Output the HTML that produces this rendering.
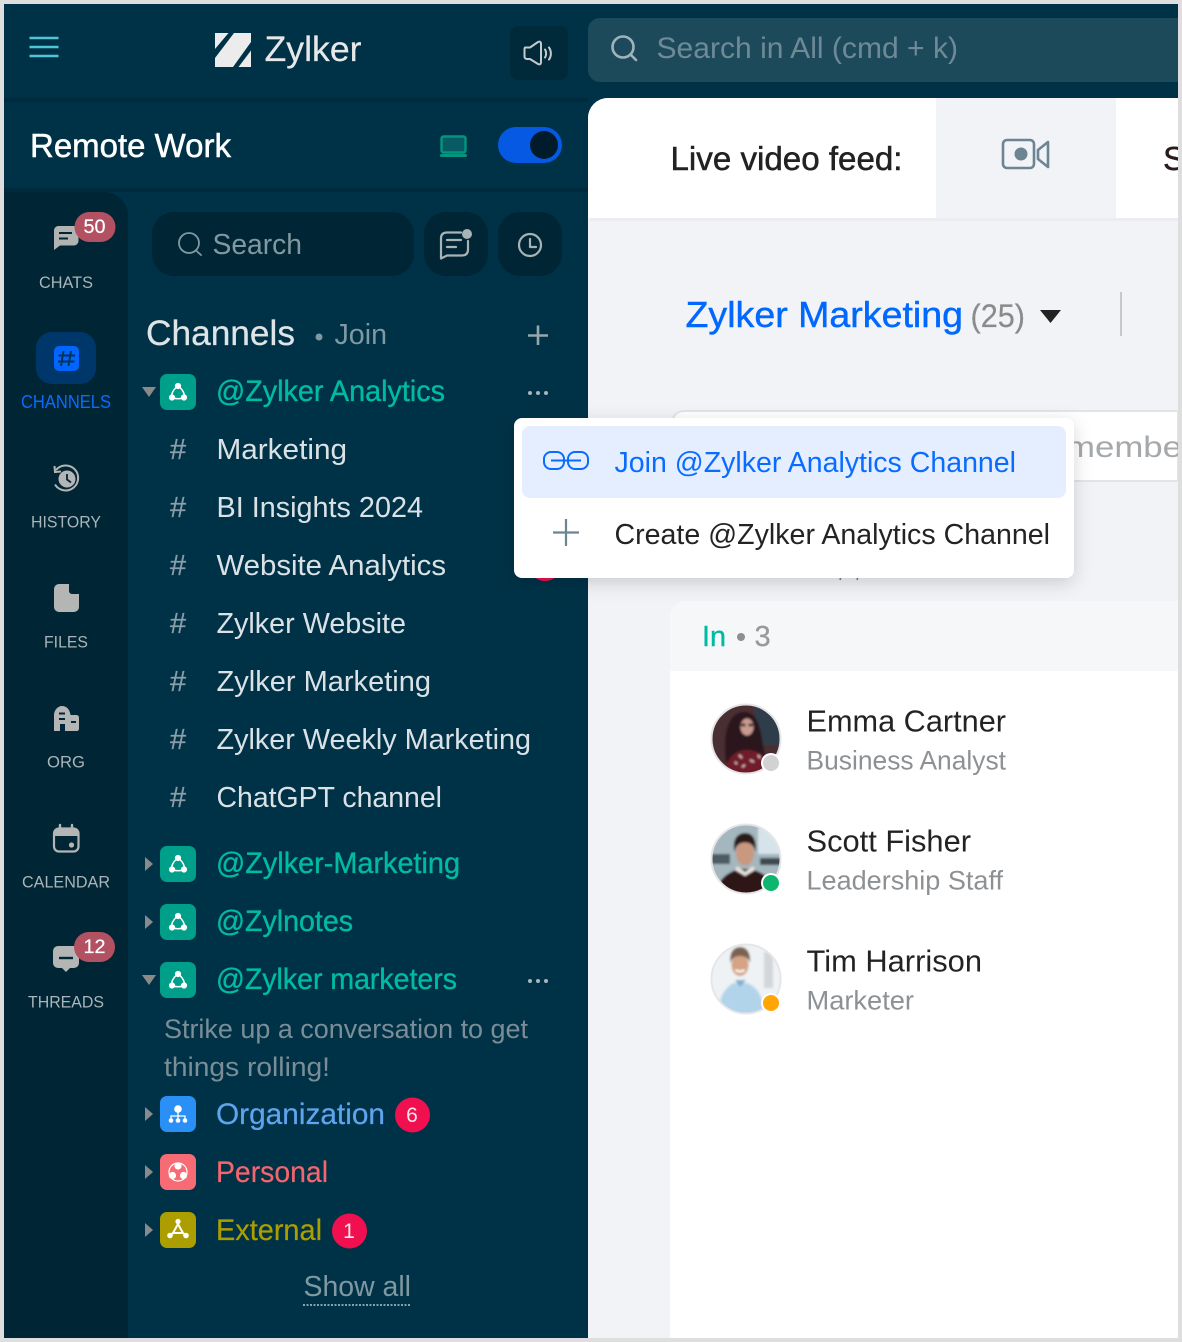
<!DOCTYPE html>
<html lang="en">
<head>
<meta charset="utf-8">
<title>Zylker Remote Work</title>
<style>
html,body{margin:0;padding:0;background:#dedede}
svg{display:block}
text{font-family:"Liberation Sans",sans-serif;white-space:pre}
.nav{font-size:17px;fill:#a9b5ba}
.ch{font-size:29px;fill:#dbe2e6}
.hash{font-size:29px;fill:#8b9ea8;stroke:#8b9ea8;stroke-width:.3}
.grp{font-size:30px;fill:#00bba4;stroke:#00bba4;stroke-width:.35}
.name{font-size:31px;fill:#232323}
.role{font-size:27px;fill:#8d9194}
</style>
</head>
<body>
<svg xmlns="http://www.w3.org/2000/svg" width="1182" height="1342" viewBox="0 0 1182 1342">
<defs>
<filter id="sh" x="-10%" y="-20%" width="120%" height="150%"><feDropShadow dx="0" dy="5" stdDeviation="9" flood-color="#000" flood-opacity=".16"/></filter>
<filter id="bl" x="-20%" y="-20%" width="140%" height="140%"><feGaussianBlur stdDeviation="1.100"/></filter>
<clipPath id="frame"><rect x="4" y="4" width="1174" height="1334"/></clipPath>
<clipPath id="a1"><circle cx="746" cy="739" r="34"/></clipPath>
<clipPath id="a2"><circle cx="746" cy="859" r="34"/></clipPath>
<clipPath id="a3"><circle cx="746" cy="979" r="34"/></clipPath>
<g id="team"><path d="M-1-5.500Q-7 0-6.500 5.500Q0 8 6.500 5.500Q7 0 1-5.500" fill="none" stroke="#fff" stroke-width="1.500"/><circle cx="0" cy="-6" r="3.100" fill="#fff"/><circle cx="-6" cy="5.500" r="3.100" fill="#fff"/><circle cx="6" cy="5.500" r="3.100" fill="#fff"/></g>
</defs>
<rect width="1182" height="1342" fill="#dedede"/>
<g clip-path="url(#frame)">
<rect x="4" y="4" width="1174" height="1334" fill="#003247"/>
<rect x="4" y="98" width="584" height="4" fill="#002b3e"/>
<rect x="4" y="188" width="584" height="4" fill="#002b3e"/>
<path d="M4 192H104a24 24 0 0 1 24 24V1338H4Z" fill="#002534"/>

<!-- top bar -->
<g stroke="#4fc5da" stroke-width="2.400"><path d="M29.500 38H58.500M29.500 47H58.500M29.500 56H58.500"/></g>
<g fill="#ececec">
<path d="M215 33H228.500L215 49Z"/>
<path d="M234 33H251V42L233 67H215V58Z"/>
<path d="M251 50.500V67H238.500Z"/>
</g>
<text x="264.500" y="61" font-size="35" fill="#e8e8e8" stroke="#e8e8e8" stroke-width=".2" textLength="97" lengthAdjust="spacingAndGlyphs">Zylker</text>
<rect x="510" y="26" width="58" height="54" rx="8" fill="#002a3a"/>
<g fill="none" stroke="#c3cbce" stroke-width="2" stroke-linecap="round" stroke-linejoin="round">
<path d="M525 47.500H530L538 42C540 41 541 42 541 44V62C541 64 540 65 538 64L530 59H527C525.500 59 524.500 58 524.500 56.500V49C524.500 48 525 47.500 525 47.500Z"/>
<path d="M545 49.500C546.500 51.500 546.500 55.500 545 57.500M549 47.500C551.500 51 551.500 56 549 59.500"/>
</g>
<path d="M1178 18H600a12 12 0 0 0-12 12V70a12 12 0 0 0 12 12H1178Z" fill="#1c4a5b"/>
<circle cx="623" cy="47" r="10.500" fill="none" stroke="#a1b2ba" stroke-width="2.600"/>
<path d="M631 55L636 60" stroke="#a1b2ba" stroke-width="2.600" stroke-linecap="round"/>
<text x="656.500" y="58" font-size="30" fill="#6f8a96" textLength="301.500" lengthAdjust="spacingAndGlyphs">Search in All (cmd + k)</text>

<!-- Remote work row -->
<text x="30" y="157" font-size="33" fill="#fff" stroke="#fff" stroke-width=".5" textLength="201" lengthAdjust="spacingAndGlyphs">Remote Work</text>
<rect x="441.500" y="136.500" width="24" height="16" rx="2" fill="#0a5a63" stroke="#00967f" stroke-width="2.400"/>
<rect x="440" y="154" width="27" height="3" rx="1.500" fill="#00967f"/>
<rect x="498" y="127" width="64" height="36" rx="18" fill="#0559e2"/>
<circle cx="544" cy="145" r="14" fill="#001c2c"/>

<!-- sidebar nav -->
<path d="M58 226H74a4.500 4.500 0 0 1 4.500 4.500V241a4.500 4.500 0 0 1-4.500 4.500H60L54 250V230.500A4.500 4.500 0 0 1 58 226Z" fill="#b1b3b3"/>
<path d="M59 233H72M59 238.500H68" stroke="#002534" stroke-width="2"/>
<rect x="74.500" y="212" width="41" height="30" rx="15" fill="#b25162"/>
<text x="94.500" y="233" font-size="19" fill="#fff" text-anchor="middle" stroke="#fff" stroke-width=".2" textLength="22" lengthAdjust="spacingAndGlyphs">50</text>
<text x="39" y="288" class="nav" textLength="54" lengthAdjust="spacingAndGlyphs">CHATS</text>

<rect x="36" y="332" width="60" height="52" rx="16" fill="#00376a"/>
<rect x="54" y="346" width="25" height="25" rx="5" fill="#0066ff"/>
<path d="M63.500 351L61 366M71 351L68.500 366M58.500 355.500H75M58 361.500H74.500" stroke="#00325a" stroke-width="2" fill="none"/>
<text x="21" y="408" font-size="18" fill="#0a6cff" textLength="90" lengthAdjust="spacingAndGlyphs">CHANNELS</text>

<g fill="none" stroke="#b4b6b6" stroke-width="2"><path d="M56 470A12.500 12.500 0 1 1 55 484.500"/><path d="M54.500 466L55 472L61 471.500"/></g>
<circle cx="67" cy="479" r="8.500" fill="#b4b6b6"/><path d="M67 474V479.500L71 482.500" stroke="#002534" stroke-width="1.800" fill="none"/>
<text x="31" y="527.500" class="nav" textLength="70" lengthAdjust="spacingAndGlyphs">HISTORY</text>

<path d="M59 584H69L79 594V607a5 5 0 0 1-5 5H59a5 5 0 0 1-5-5V589a5 5 0 0 1 5-5Z" fill="#b4b6b6"/>
<path d="M69.500 585L78 593.500H72a2.500 2.500 0 0 1-2.500-2.500Z" fill="#002534" stroke="#002534"/>
<text x="44" y="647.500" class="nav" textLength="44" lengthAdjust="spacingAndGlyphs">FILES</text>

<path d="M54 731V715C54 710 58 706 62 706C67 706 70 710 70.500 715H76C78 715 79 716 79 718V729C79 730 78 731 77 731H65V724H60V731Z" fill="#b4b6b6"/>
<path d="M59 713.500H65M59 719H65M71 722H76" stroke="#002534" stroke-width="2"/>
<text x="47" y="767.500" class="nav" textLength="38" lengthAdjust="spacingAndGlyphs">ORG</text>

<rect x="54" y="828.500" width="24.500" height="23" rx="5" fill="none" stroke="#b4b6b6" stroke-width="2.200"/>
<path d="M54 836V833C54 830 56 828 59 828H74C77 828 78.500 830 78.500 833V836Z" fill="#b4b6b6"/>
<path d="M60 825V829M72 825V829" stroke="#b4b6b6" stroke-width="2.400" stroke-linecap="round"/>
<circle cx="71.500" cy="845" r="2.600" fill="#b4b6b6"/>
<text x="22" y="887.500" class="nav" textLength="88" lengthAdjust="spacingAndGlyphs">CALENDAR</text>

<path d="M58 946H74a5 5 0 0 1 5 5V963a5 5 0 0 1-5 5H70L66 972L62 968H58a5 5 0 0 1-5-5V951a5 5 0 0 1 5-5Z" fill="#b4b6b6"/>
<path d="M59 958H73" stroke="#002534" stroke-width="2.400"/>
<rect x="74" y="932" width="41" height="30" rx="15" fill="#b25162"/>
<text x="94.500" y="953" font-size="19" fill="#fff" text-anchor="middle" stroke="#fff" stroke-width=".2" textLength="22" lengthAdjust="spacingAndGlyphs">12</text>
<text x="28" y="1007.500" class="nav" textLength="76" lengthAdjust="spacingAndGlyphs">THREADS</text>

<!-- panel search -->
<rect x="152" y="212" width="262" height="64" rx="22" fill="#002534"/>
<circle cx="189" cy="243" r="10" fill="none" stroke="#7f98a2" stroke-width="1.800"/>
<path d="M196 250.500L201 255" stroke="#7f98a2" stroke-width="1.800" stroke-linecap="round"/>
<text x="212.500" y="254" font-size="29" fill="#7f98a2" textLength="89.500" lengthAdjust="spacingAndGlyphs">Search</text>
<rect x="424" y="212" width="64" height="64" rx="22" fill="#002534"/>
<rect x="498" y="212" width="64" height="64" rx="22" fill="#002534"/>
<g fill="none" stroke="#a9b2b5" stroke-width="2.200" stroke-linecap="round" stroke-linejoin="round">
<path d="M461 232.500H447C443 232.500 441 234.500 441 238.500V258.500L447 255.500H462C466 255.500 468 253.500 468 249.500V241"/>
<path d="M447 240H461M447 247H456"/>
<circle cx="530" cy="245" r="11"/>
<path d="M530 239V247H536"/>
</g>
<circle cx="467" cy="234" r="5" fill="#a9b2b5"/>

<!-- channels -->
<text x="146" y="345" font-size="35" fill="#dfe4e6" stroke="#dfe4e6" stroke-width=".25" textLength="149" lengthAdjust="spacingAndGlyphs">Channels</text>
<circle cx="319" cy="337" r="3.500" fill="#7f98a2"/>
<text x="334.500" y="344" font-size="29" fill="#7f98a2" textLength="52.500" lengthAdjust="spacingAndGlyphs">Join</text>
<path d="M538 325.500V345M528 335.500H548" stroke="#96a7ae" stroke-width="2.600"/>

<path d="M142 387H156L149 397Z" fill="#8a8a8a"/>
<rect x="160" y="374" width="36" height="36" rx="7" fill="#009f8a"/><use href="#team" x="178" y="392"/>
<text x="216" y="401" class="grp" textLength="229" lengthAdjust="spacingAndGlyphs">@Zylker Analytics</text>
<g fill="#a9b5ba"><circle cx="530" cy="393" r="2"/><circle cx="538" cy="393" r="2"/><circle cx="546" cy="393" r="2"/></g>

<text x="170" y="459" class="hash">#</text><text x="216.500" y="459" class="ch" textLength="130.500" lengthAdjust="spacingAndGlyphs">Marketing</text>
<text x="170" y="517" class="hash">#</text><text x="216.500" y="517" class="ch" textLength="206.500" lengthAdjust="spacingAndGlyphs">BI Insights 2024</text>
<text x="170" y="575" class="hash">#</text><text x="216.500" y="575" class="ch" textLength="229.500" lengthAdjust="spacingAndGlyphs">Website Analytics</text>
<text x="170" y="633" class="hash">#</text><text x="216.500" y="633" class="ch" textLength="189.500" lengthAdjust="spacingAndGlyphs">Zylker Website</text>
<text x="170" y="691" class="hash">#</text><text x="216.500" y="691" class="ch" textLength="214.500" lengthAdjust="spacingAndGlyphs">Zylker Marketing</text>
<text x="170" y="749" class="hash">#</text><text x="216.500" y="749" class="ch" textLength="314.500" lengthAdjust="spacingAndGlyphs">Zylker Weekly Marketing</text>
<text x="170" y="807" class="hash">#</text><text x="216.500" y="807" class="ch" textLength="225.500" lengthAdjust="spacingAndGlyphs">ChatGPT channel</text>

<path d="M145 857L153 864L145 871Z" fill="#8a8a8a"/>
<rect x="160" y="846" width="36" height="36" rx="7" fill="#009f8a"/><use href="#team" x="178" y="864"/>
<text x="216" y="873" class="grp" textLength="244" lengthAdjust="spacingAndGlyphs">@Zylker-Marketing</text>
<path d="M145 915L153 922L145 929Z" fill="#8a8a8a"/>
<rect x="160" y="904" width="36" height="36" rx="7" fill="#009f8a"/><use href="#team" x="178" y="922"/>
<text x="216" y="931" class="grp" textLength="137" lengthAdjust="spacingAndGlyphs">@Zylnotes</text>
<path d="M142 975H156L149 985Z" fill="#8a8a8a"/>
<rect x="160" y="962" width="36" height="36" rx="7" fill="#009f8a"/><use href="#team" x="178" y="980"/>
<text x="216" y="989" class="grp" textLength="241" lengthAdjust="spacingAndGlyphs">@Zylker marketers</text>
<g fill="#a9b5ba"><circle cx="530" cy="981" r="2"/><circle cx="538" cy="981" r="2"/><circle cx="546" cy="981" r="2"/></g>

<text x="164" y="1038" font-size="27" fill="#7b8d96" textLength="364" lengthAdjust="spacingAndGlyphs">Strike up a conversation to get</text>
<text x="164" y="1076" font-size="27" fill="#7b8d96" textLength="166" lengthAdjust="spacingAndGlyphs">things rolling!</text>

<path d="M145 1107L153 1114L145 1121Z" fill="#8a8a8a"/>
<rect x="160" y="1096" width="36" height="36" rx="7" fill="#2a90f5"/>
<g fill="#fff"><circle cx="178" cy="1109" r="3.800"/><circle cx="171" cy="1120.500" r="2.300"/><circle cx="178" cy="1120.500" r="2.300"/><circle cx="185" cy="1120.500" r="2.300"/></g>
<path d="M178 1109V1120M171 1120V1116H185V1120" stroke="#fff" stroke-width="1.300" fill="none"/>
<text x="216" y="1124" font-size="30" fill="#5fa5ee" stroke="#5fa5ee" stroke-width=".2" textLength="169" lengthAdjust="spacingAndGlyphs">Organization</text>
<circle cx="412.500" cy="1115" r="17.500" fill="#f0104f"/>
<text x="412" y="1122" font-size="21" fill="#f4e8ea" text-anchor="middle">6</text>

<path d="M145 1165L153 1172L145 1179Z" fill="#8a8a8a"/>
<rect x="160" y="1154" width="36" height="36" rx="7" fill="#f76b74"/>
<circle cx="178" cy="1172" r="9" fill="none" stroke="#fff" stroke-width="1.200"/>
<g fill="#fff"><circle cx="178" cy="1166" r="3.600"/><circle cx="172.500" cy="1175.500" r="3.600"/><circle cx="183.500" cy="1175.500" r="3.600"/></g>
<text x="216" y="1182" font-size="30" fill="#f3666d" stroke="#f3666d" stroke-width=".2" textLength="112" lengthAdjust="spacingAndGlyphs">Personal</text>

<path d="M145 1223L153 1230L145 1237Z" fill="#8a8a8a"/>
<rect x="160" y="1212" width="36" height="36" rx="7" fill="#ad9e00"/>
<path d="M178 1224L173 1233H183Z" stroke="#fff" stroke-width="2" fill="none"/>
<path d="M171 1235L173 1233M185 1235L183 1233" stroke="#fff" stroke-width="2"/>
<g fill="#fff"><circle cx="178" cy="1221.500" r="2.600"/><circle cx="170" cy="1235.500" r="2.800"/><circle cx="186" cy="1235.500" r="2.800"/></g>
<text x="216" y="1240" font-size="30" fill="#ad9e00" stroke="#ad9e00" stroke-width=".2" textLength="106" lengthAdjust="spacingAndGlyphs">External</text>
<circle cx="349.500" cy="1231" r="17.500" fill="#f0104f"/>
<text x="349" y="1238" font-size="21" fill="#f4e8ea" text-anchor="middle">1</text>

<text x="303.500" y="1296" font-size="29" fill="#7f98a2" textLength="107.500" lengthAdjust="spacingAndGlyphs">Show all</text>
<path d="M303 1305H411" stroke="#8ba0a9" stroke-width="2" stroke-dasharray="2 1.500"/>

<circle cx="545" cy="564" r="17" fill="#f0104f"/>

<!-- main -->
<path d="M1178 98H608a20 20 0 0 0-20 20V1338H1178Z" fill="#f1f3f7"/>
<path d="M1178 98H608a20 20 0 0 0-20 20V218H1178Z" fill="#fff"/>
<rect x="589" y="218" width="589" height="3" fill="#ebedf0"/>
<rect x="936" y="98" width="180" height="120" fill="#f1f3f7"/>
<text x="670.500" y="170" font-size="33" fill="#222" stroke="#222" stroke-width=".5" textLength="232" lengthAdjust="spacingAndGlyphs">Live video feed:</text>
<text x="1163" y="170" font-size="33" fill="#2a1a1a" stroke="#2a1a1a" stroke-width=".4">S</text>
<rect x="1003" y="140" width="31" height="28" rx="4" fill="none" stroke="#6d8492" stroke-width="2.600"/>
<circle cx="1021" cy="154" r="6.500" fill="#6d8492"/>
<path d="M1038 150L1048 142V167L1038 159Z" fill="none" stroke="#6d8492" stroke-width="2.600" stroke-linejoin="round"/>

<text x="685.500" y="327" font-size="36" fill="#0068ff" stroke="#0068ff" stroke-width=".45" textLength="277.500" lengthAdjust="spacingAndGlyphs">Zylker Marketing</text>
<text x="970.500" y="327" font-size="32" fill="#8b8b8b" stroke="#8b8b8b" stroke-width=".2" textLength="54.500" lengthAdjust="spacingAndGlyphs">(25)</text>
<path d="M1040 310H1061L1050.500 323Z" fill="#232323"/>
<rect x="1120" y="292" width="2" height="44" fill="#c5c8cc"/>

<path d="M1178 411H684a12 12 0 0 0-12 12V481H1178Z" fill="#fff" stroke="#e3e4e6" stroke-width="2"/>
<text x="1066" y="457" font-size="30" fill="#a5a9ab" textLength="145" lengthAdjust="spacingAndGlyphs">members</text>
<path d="M835 573l2 5M842 573l-2 7M852 573l2 5M859 573l-2 7" stroke="#6d7f8c" stroke-width="1.500" fill="none"/>

<path d="M1178 601H686a16 16 0 0 0-16 16V1338H1178Z" fill="#fff"/>
<path d="M1178 601H686a16 16 0 0 0-16 16V671H1178Z" fill="#f6f7f8"/>
<text x="702" y="646" font-size="29" fill="#00bba4" stroke="#00bba4" stroke-width=".4" textLength="24" lengthAdjust="spacingAndGlyphs">In</text>
<circle cx="741" cy="637" r="4" fill="#8f8f8f"/>
<text x="754.500" y="646" font-size="29" fill="#999" stroke="#999" stroke-width=".3">3</text>

<!-- avatars -->
<g clip-path="url(#a1)"><g filter="url(#bl)">
<rect x="708" y="701" width="76" height="76" fill="#4a2d33"/>
<path d="M752 701H784V745H762Z" fill="#2f3d4a"/>
<path d="M726 762C722 730 730 712 744 712C755 712 760 722 763 745L766 760H750L735 770Z" fill="#2a171a"/>
<ellipse cx="747" cy="727" rx="6.500" ry="8.500" fill="#c99a90"/>
<path d="M741 725H745.500M748.500 725H753" stroke="#161616" stroke-width="2.400"/>
<path d="M724 778C726 756 736 750 747 750C760 750 770 758 772 778Z" fill="#6f1f2b"/>
<path d="M739 755l3 3M750 760l4 2M742 767l3-2M758 755l2 3M735 762l2 2" stroke="#e0c8c0" stroke-width="1.800"/>
</g></g>
<circle cx="746" cy="739" r="34.500" fill="none" stroke="#e6e6e8" stroke-width="2"/>
<circle cx="771" cy="763" r="10" fill="#fff"/><circle cx="771" cy="763" r="8" fill="#d2d2d2"/>

<g clip-path="url(#a2)"><g filter="url(#bl)">
<rect x="708" y="821" width="76" height="76" fill="#a4b6be"/>
<rect x="758" y="828" width="24" height="26" fill="#d7e3ea"/>
<rect x="708" y="854" width="22" height="10" fill="#4e5c62"/>
<rect x="760" y="858" width="24" height="7" fill="#3d4a50"/>
<ellipse cx="745" cy="853" rx="9" ry="12.500" fill="#c9997f"/>
<path d="M734.500 852C732 838 738 833 745.500 833C753 833 757 840 755.500 852C754 845 750 842.500 745 842.500C740 842.500 736 845 734.500 852Z" fill="#2a1f1c"/>
<path d="M716 897C717 878 728 873 738 869H752C762 873 775 878 776 897Z" fill="#2d1517"/>
<path d="M737 866L745 872L753 866L755 870L745 876L735 870Z" fill="#e8e2dd"/>
</g></g>
<circle cx="746" cy="859" r="34.500" fill="none" stroke="#e6e6e8" stroke-width="2"/>
<circle cx="771" cy="883" r="10" fill="#fff"/><circle cx="771" cy="883" r="8" fill="#0db56e"/>

<g clip-path="url(#a3)"><g filter="url(#bl)">
<rect x="708" y="941" width="76" height="76" fill="#eef2f4"/>
<rect x="764" y="952" width="9" height="36" fill="#d3d7d9"/>
<ellipse cx="740" cy="965" rx="8.500" ry="11" fill="#d5a384"/>
<path d="M730.500 963C729 952 734 947 740 947C747 947 751 953 750 963C748.500 958 745 956 740 956C735 956 732 958 730.500 963Z" fill="#7a6453"/>
<path d="M735.500 970Q740 973 744.500 970" stroke="#fff" stroke-width="2" fill="none"/>
<path d="M718 1017C718 995 727 986 734 983H747C757 987 764 996 764 1017Z" fill="#b2d4ea"/>
<path d="M735 980L740 987L746 980Z" fill="#7fb0d0"/>
</g></g>
<circle cx="746" cy="979" r="34.500" fill="none" stroke="#e6e6e8" stroke-width="2"/>
<circle cx="771" cy="1003" r="10" fill="#fff"/><circle cx="771" cy="1003" r="8" fill="#ffa505"/>

<text x="806.500" y="731.500" class="name" textLength="199.500" lengthAdjust="spacingAndGlyphs">Emma Cartner</text>
<text x="806.500" y="769.500" class="role" textLength="199.500" lengthAdjust="spacingAndGlyphs">Business Analyst</text>
<text x="806.500" y="851.500" class="name" textLength="164.500" lengthAdjust="spacingAndGlyphs">Scott Fisher</text>
<text x="806.500" y="889.500" class="role" textLength="196.500" lengthAdjust="spacingAndGlyphs">Leadership Staff</text>
<text x="806.500" y="971.500" class="name" textLength="175.500" lengthAdjust="spacingAndGlyphs">Tim Harrison</text>
<text x="806.500" y="1009.500" class="role" textLength="107.500" lengthAdjust="spacingAndGlyphs">Marketer</text>

<!-- popup -->
<rect x="514" y="418" width="560" height="160" rx="8" fill="#fff" filter="url(#sh)"/>
<rect x="522" y="426" width="544" height="72" rx="8" fill="#e5eeff"/>
<g fill="none" stroke="#0a6cff" stroke-width="2">
<rect x="544" y="452" width="20" height="17" rx="7"/>
<rect x="568" y="452" width="20" height="17" rx="7"/>
<path d="M551 460.500H581"/>
</g>
<text x="614.500" y="472" font-size="29" fill="#0a6cff" textLength="401.500" lengthAdjust="spacingAndGlyphs">Join @Zylker Analytics Channel</text>
<path d="M566 519V546M553 532.500H579" stroke="#6d8492" stroke-width="2.200"/>
<text x="614.500" y="544" font-size="29" fill="#232323" textLength="435.500" lengthAdjust="spacingAndGlyphs">Create @Zylker Analytics Channel</text>
</g>
</svg>
</body>
</html>
